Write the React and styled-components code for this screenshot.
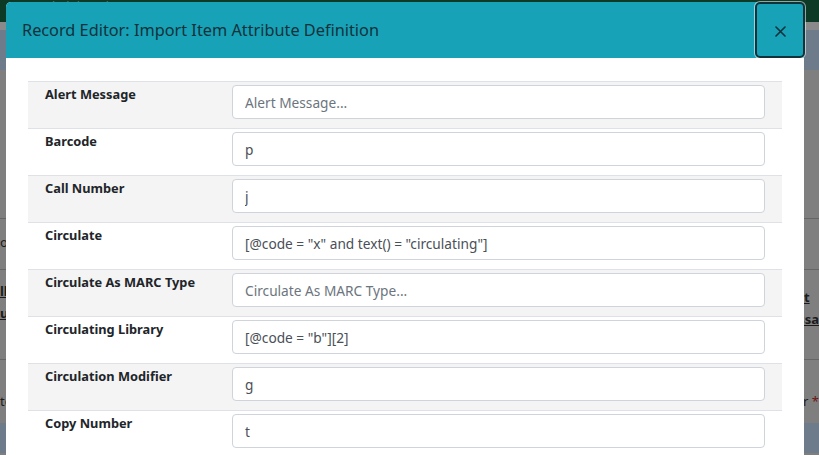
import React from "react";
import styled, { createGlobalStyle } from "styled-components";

const GlobalStyle = createGlobalStyle`
  html, body {
    margin: 0;
    padding: 0;
    height: 100%;
    overflow: hidden;
    font-family: "Noto Sans", "Open Sans", sans-serif;
  }
`;

/* page behind the modal (already dimmed by the backdrop) */
const Page = styled.div`
  width: 819px;
  height: 455px;
  background: #7f7f7f;
  display: flex;
  flex-direction: column;
  overflow: hidden;
`;

const TopNav = styled.div`
  height: 22px;
  background: #0c3a27;
  color: #5d7a6c;
  font-size: 12px;
  line-height: 14px;
  padding-left: 40px;
  box-sizing: border-box;
`;

const SubBar = styled.div`
  height: 8px;
  background: #8a8a8a;
`;

const BlueBand = styled.div`
  height: ${(p) => p.h}px;
  background: #6e7b8a;
`;

const PageRows = styled.div`
  display: flex;
  justify-content: space-between;
  height: ${(p) => p.h}px;
  border-top: ${(p) => (p.line ? "1px solid #666" : "none")};
  color: #1b1b1b;
  font-size: 13px;
`;

const PageText = styled.span`
  display: block;
  padding-top: ${(p) => p.pt || 0}px;
  font-weight: ${(p) => (p.bold ? 700 : 400)};
  text-decoration: ${(p) => (p.bold ? "underline" : "none")};
  line-height: 22px;
`;

const Star = styled.span`
  color: #6e1414;
`;

/* modal */
const Overlay = styled.div`
  position: fixed;
  inset: 0;
  padding: 2px 15px 0 6px;
`;

const Dialog = styled.div`
  width: 798px;
  height: 470px;
  background: #fff;
  border-radius: 5px;
  display: flex;
  flex-direction: column;
`;

const Header = styled.div`
  height: 56px;
  background: #17a2b8;
  border-radius: 5px 5px 0 0;
  display: flex;
  align-items: center;
  justify-content: space-between;
  padding: 0 0 0 16px;
`;

const Title = styled.h5`
  margin: 0;
  font-size: 16.3px;
  font-weight: 400;
  color: #12323b;
`;

const CloseButton = styled.button`
  width: 50px;
  height: 56px;
  margin-right: -1px;
  box-sizing: border-box;
  background: #17a2b8;
  border: 2px solid #10323b;
  border-radius: 5px;
  box-shadow: 0 0 0 1px rgba(255, 255, 255, 0.55);
  display: flex;
  align-items: center;
  justify-content: center;
  padding: 3px 0 0 0;
  cursor: pointer;
`;

const Body = styled.div`
  padding: 23px 22px 0 22px;
`;

const Table = styled.div`
  display: flex;
  flex-direction: column;
`;

const Row = styled.div`
  display: grid;
  grid-template-columns: 204px 1fr;
  border-top: 1px solid #dee2e6;
  background: ${(p) => (p.striped ? "#f4f4f4" : "#fff")};
`;

const Label = styled.div`
  padding: 3px 5px 0 17px;
  font-size: 12.8px;
  line-height: 19.5px;
  font-weight: 700;
  color: #212529;
`;

const InputCell = styled.div`
  padding: 3px 17px 9px 0;
`;

const Input = styled.input`
  box-sizing: border-box;
  width: 100%;
  height: 34px;
  padding: 0 12px;
  border: 1px solid #ced4da;
  border-radius: 4px;
  font-family: "Noto Sans", "Open Sans", sans-serif;
  font-size: 13.7px;
  color: #495057;
  background: #fff;
  outline: none;

  &::placeholder {
    color: #6c757d;
  }
`;

const fields = [
  { label: "Alert Message", value: "" },
  { label: "Barcode", value: "p" },
  { label: "Call Number", value: "j" },
  { label: "Circulate", value: '[@code = "x" and text() = "circulating"]' },
  { label: "Circulate As MARC Type", value: "" },
  { label: "Circulating Library", value: '[@code = "b"][2]' },
  { label: "Circulation Modifier", value: "g" },
  { label: "Copy Number", value: "t" },
];

const CloseIcon = () => (
  <svg width="11" height="11" viewBox="0 0 11 11">
    <path d="M1 1 L10 10 M10 1 L1 10" stroke="#12323b" strokeWidth="1.6" strokeLinecap="round" />
  </svg>
);

export default function App() {
  return (
    <>
      <GlobalStyle />
      <Page>
        <TopNav>Administration</TopNav>
        <SubBar />
        <BlueBand h={40} />
        <PageRows h={148} />
        <PageRows h={50} line>
          <PageText pt={12}>or</PageText>
          <PageText pt={12} />
        </PageRows>
        <PageRows h={89} line>
          <PageText pt={10} bold>
            ll
            <br />
            ur
          </PageText>
          <PageText pt={16} bold>
            rt
            <br />
            ssa
          </PageText>
        </PageRows>
        <PageRows h={63} line>
          <PageText pt={30}>te</PageText>
          <PageText pt={30}>
            er <Star>*</Star>
          </PageText>
        </PageRows>
        <BlueBand h={30} />
      </Page>
      <Overlay>
        <Dialog>
          <Header>
            <Title>Record Editor: Import Item Attribute Definition</Title>
            <CloseButton aria-label="Close">
              <CloseIcon />
            </CloseButton>
          </Header>
          <Body>
            <Table>
              {fields.map((f, i) => (
                <Row key={f.label} striped={i % 2 === 0}>
                  <Label>{f.label}</Label>
                  <InputCell>
                    <Input readOnly value={f.value} placeholder={`${f.label}...`} />
                  </InputCell>
                </Row>
              ))}
            </Table>
          </Body>
        </Dialog>
      </Overlay>
    </>
  );
}
